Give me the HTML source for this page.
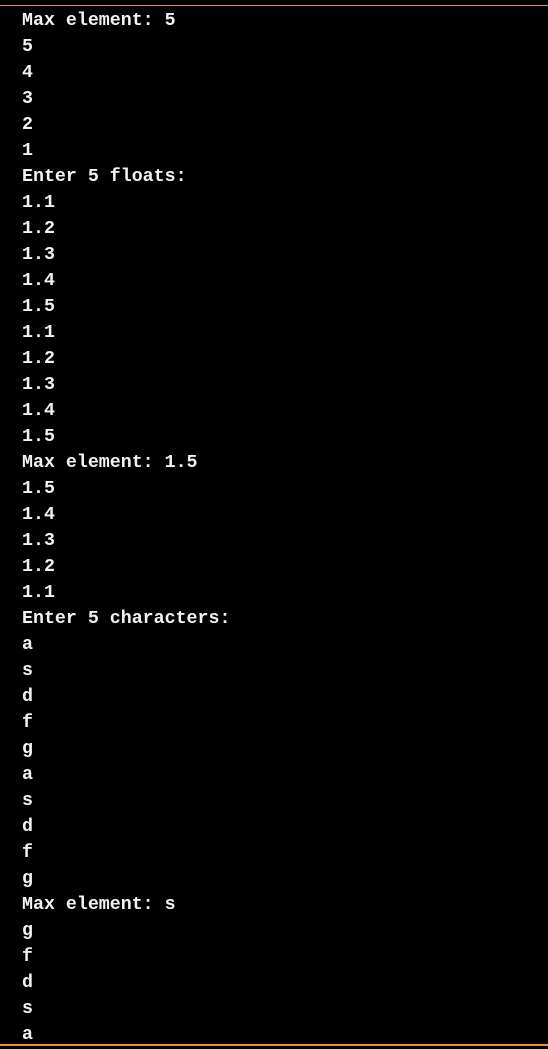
<!DOCTYPE html>
<html><head><style>
html,body{margin:0;padding:0;background:#000;width:548px;height:1049px;overflow:hidden}
.t{position:absolute;left:0;top:5px;width:548px;height:1px;background:#e8902e}
.b{position:absolute;left:0;top:1044px;width:548px;height:2px;background:#e8902e}
pre{position:absolute;left:22px;top:8px;margin:0;font-family:"Liberation Mono",monospace;font-size:18.3px;line-height:26px;color:#f2f2f2;font-weight:bold}
</style></head><body>
<div class="t"></div>
<pre>Max element: 5
5
4
3
2
1
Enter 5 floats:
1.1
1.2
1.3
1.4
1.5
1.1
1.2
1.3
1.4
1.5
Max element: 1.5
1.5
1.4
1.3
1.2
1.1
Enter 5 characters:
a
s
d
f
g
a
s
d
f
g
Max element: s
g
f
d
s
a</pre>
<div class="b"></div>
</body></html>
